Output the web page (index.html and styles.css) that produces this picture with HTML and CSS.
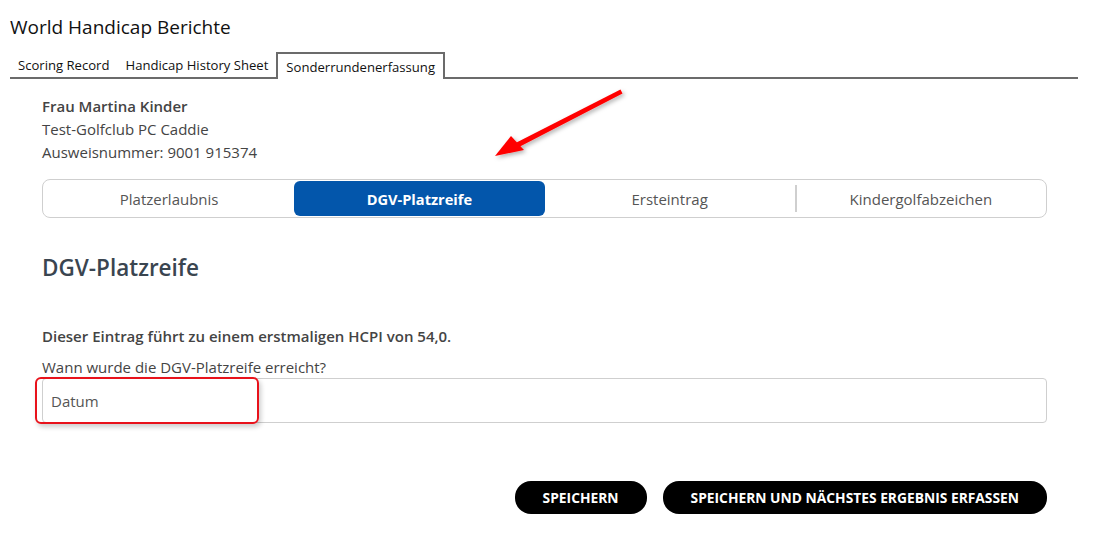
FILE: index.html
```html
<!DOCTYPE html>
<html lang="de">
<head>
    <meta charset="UTF-8">
    <meta name="viewport" content="width=device-width, initial-scale=1.0">
    <title>World Handicap Berichte</title>
    <link rel="stylesheet" href="styles.css">
</head>
<body>
    <div class="page">
        <h1 class="title">World Handicap Berichte</h1>

        <div class="tabs">
            <div class="tab">Scoring Record</div>
            <div class="tab">Handicap History Sheet</div>
            <div class="tab active">Sonderrundenerfassung</div>
        </div>

        <div class="content">
            <div class="player">
                <div class="name">Frau Martina Kinder</div>
                <div>Test-Golfclub PC Caddie</div>
                <div>Ausweisnummer: 9001 915374</div>
            </div>

            <div class="segments">
                <div class="segment">Platzerlaubnis</div>
                <div class="segment selected">DGV-Platzreife</div>
                <div class="segment">Ersteintrag</div>
                <div class="segment divided">Kindergolfabzeichen</div>
            </div>

            <h2 class="section-title">DGV-Platzreife</h2>

            <p class="notice">Dieser Eintrag führt zu einem erstmaligen HCPI von 54,0.</p>
            <label class="field-label" for="datum">Wann wurde die DGV-Platzreife erreicht?</label>
            <div class="field">
                <input id="datum" class="input" type="text" placeholder="Datum">
                <span class="highlight"></span>
            </div>

            <div class="actions">
                <button class="btn">SPEICHERN</button>
                <button class="btn">SPEICHERN UND NÄCHSTES ERGEBNIS ERFASSEN</button>
            </div>
        </div>

        <!-- hint arrow pointing at the selected segment -->
        <svg class="arrow" width="150" height="90" viewBox="0 0 150 90">
            <defs>
                <filter id="shadow" x="-20%" y="-20%" width="140%" height="140%">
                    <feDropShadow dx="2" dy="2" stdDeviation="2" flood-color="#000" flood-opacity="0.3"/>
                </filter>
            </defs>
            <g filter="url(#shadow)" fill="#ff0000" stroke="none">
                <path d="M133.5 5.5 L135.5 9.5 L32 63 L29.5 58.5 Z"/>
                <path d="M8 72 L24 52 L37 66 Z"/>
            </g>
        </svg>
    </div>
</body>
</html>
```

FILE: styles.css
```css
body {
    margin: 0;
    font-family: "Open Sans", Arial, sans-serif;
    color: #444;
    background: #fff;
}

.page {
    position: relative;
    padding: 0 16px 0 10px;
}

.title {
    margin: 0;
    padding-top: 14px;
    font-size: 19px;
    font-weight: 400;
    line-height: 26px;
    color: #111;
}

.tabs {
    display: flex;
    align-items: flex-end;
    margin-top: 12px;
    border-bottom: 2px solid #6b6b6b;
}

.tab {
    font-size: 13.1px;
    color: #111;
    padding: 2px 8px 3px 8px;
    line-height: 18px;
}

.tab.active {
    border: 2px solid #6b6b6b;
    border-bottom: none;
    padding: 4px 8px 3px 8px;
    margin-bottom: -2px;
    background: #fff;
}

.content {
    padding: 16px 31px 0 32px;
}

.player {
    font-size: 15px;
    line-height: 23px;
    color: #444;
}

.player .name {
    font-weight: 600;
}

.segments {
    display: grid;
    grid-template-columns: repeat(4, 1fr);
    margin-top: 15px;
    height: 39px;
    border: 1px solid #cfcfcf;
    border-radius: 8px;
    padding: 1px;
    box-sizing: border-box;
}

.segment {
    display: flex;
    align-items: center;
    justify-content: center;
    font-size: 15px;
    color: #555;
    border-radius: 6px;
}

.segment.selected {
    background: #0356ab;
    color: #fff;
    font-weight: 700;
    font-size: 14.6px;
}

.segment.divided {
    border-left: 2px solid #cfcfcf;
    border-radius: 0;
    margin: 4px 0;
}

.section-title {
    margin: 35px 0 0 0;
    font-size: 22.5px;
    font-weight: 600;
    line-height: 30px;
    color: #3a4550;
}

.notice {
    margin: 42px 0 0 0;
    font-size: 15px;
    font-weight: 600;
    line-height: 22px;
}

.field-label {
    display: block;
    margin-top: 10px;
    font-size: 15px;
    line-height: 20px;
    color: #444;
}

.field {
    position: relative;
    margin-top: 1px;
}

.input {
    display: block;
    width: 100%;
    height: 45px;
    box-sizing: border-box;
    border: 1px solid #cfcfcf;
    border-radius: 4px;
    padding: 0 8px;
    font-family: inherit;
    font-size: 15px;
    color: #444;
    outline: none;
}

.input::placeholder {
    color: #555;
}

/* red marker around the date input */
.highlight {
    position: absolute;
    left: -7px;
    top: -1px;
    width: 224px;
    height: 47px;
    box-sizing: border-box;
    border: 2px solid #e8121b;
    border-radius: 6px;
    box-shadow: 2px 3px 5px rgba(0, 0, 0, 0.2);
    pointer-events: none;
}

.actions {
    display: flex;
    justify-content: flex-end;
    gap: 16px;
    margin-top: 58px;
}

.btn {
    height: 33px;
    border: none;
    border-radius: 16px;
    background: #000;
    color: #fff;
    font-family: inherit;
    font-size: 13.8px;
    font-weight: 700;
    padding: 0 28px;
}

.arrow {
    position: absolute;
    left: 487px;
    top: 84px;
}
```
